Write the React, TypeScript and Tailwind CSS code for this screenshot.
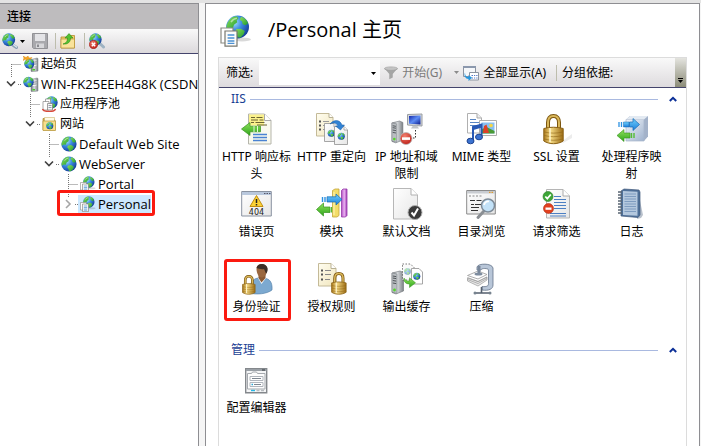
import type { ReactNode } from "react";

type IconProps = { className?: string };

// Gradients shared by all the icons
function IconDefs() {
  return (
    <svg className="absolute size-0" aria-hidden="true">
      <defs>
        <radialGradient id="ocean" cx="0.35" cy="0.3" r="0.75">
          <stop offset="0" stopColor="#a9e2fb" />
          <stop offset="0.45" stopColor="#3b8be0" />
          <stop offset="1" stopColor="#123a94" />
        </radialGradient>
        <linearGradient id="land" x1="0" y1="0" x2="1" y2="1">
          <stop offset="0" stopColor="#8fe05a" />
          <stop offset="1" stopColor="#1d9a32" />
        </linearGradient>
        <linearGradient id="steel" x1="0" y1="0" x2="1" y2="0">
          <stop offset="0" stopColor="#6d7176" />
          <stop offset="0.45" stopColor="#d9dcdf" />
          <stop offset="1" stopColor="#7c8186" />
        </linearGradient>
        <linearGradient id="gold" x1="0" y1="0" x2="1" y2="0">
          <stop offset="0" stopColor="#a9781c" />
          <stop offset="0.35" stopColor="#f6dc86" />
          <stop offset="1" stopColor="#9c6c14" />
        </linearGradient>
        <linearGradient id="paper" x1="0" y1="0" x2="1" y2="1">
          <stop offset="0" stopColor="#ffffff" />
          <stop offset="1" stopColor="#e6e6e6" />
        </linearGradient>
        <linearGradient id="cream" x1="0" y1="0" x2="1" y2="1">
          <stop offset="0" stopColor="#fffdf0" />
          <stop offset="1" stopColor="#f1e6bd" />
        </linearGradient>
        <linearGradient id="block" x1="0" y1="0" x2="1" y2="1">
          <stop offset="0" stopColor="#f2f6fb" />
          <stop offset="1" stopColor="#9fb2cd" />
        </linearGradient>
        <linearGradient id="greenArrow" x1="0" y1="0" x2="0" y2="1">
          <stop offset="0" stopColor="#8fe25c" />
          <stop offset="1" stopColor="#2fa51c" />
        </linearGradient>
        <linearGradient id="blueArrow" x1="0" y1="0" x2="0" y2="1">
          <stop offset="0" stopColor="#6fd0fb" />
          <stop offset="1" stopColor="#1c7fdc" />
        </linearGradient>
        <linearGradient id="purple" x1="0" y1="0" x2="1" y2="0">
          <stop offset="0" stopColor="#b14bc4" />
          <stop offset="0.5" stopColor="#e9b3f0" />
          <stop offset="1" stopColor="#a13ab6" />
        </linearGradient>
        <linearGradient id="screen" x1="0" y1="0" x2="1" y2="1">
          <stop offset="0" stopColor="#1226a8" />
          <stop offset="0.5" stopColor="#5d8df5" />
          <stop offset="1" stopColor="#0b1b8c" />
        </linearGradient>
        <radialGradient id="red" cx="0.4" cy="0.3" r="0.8">
          <stop offset="0" stopColor="#f2806f" />
          <stop offset="1" stopColor="#b9150f" />
        </radialGradient>
      </defs>
    </svg>
  );
}

function Globe({ x = 0, y = 0, size = 16 }: { x?: number; y?: number; size?: number }) {
  return (
    <g transform={`translate(${x} ${y}) scale(${size / 16})`}>
      <circle cx="8" cy="8" r="7.6" fill="url(#ocean)" />
      <path d="M2 4.2C3.3 2 5 .9 7.2.8L8.6 2 7.4 3.6l.4 1.3-2.2 1.6-.8 2.3-2-.4L.7 9.8C.3 7.6.9 5.7 2 4.2Z" fill="url(#land)" />
      <path d="M10.3 1.2c2.2.6 3.9 2.1 4.7 4.3l-1.7 1.3-1.9-.7-.5-2-1.5-.8Z" fill="url(#land)" />
      <path d="M7.3 9.4l2.9-.3 2.6 1.6-.7 2.2-2.3 2.3-1.7-.3-.8-2.4-1.2-1.3Z" fill="url(#land)" />
      <path d="M3.6 4.7C4.7 3 6 2.3 7.6 2.1" stroke="#fff" strokeOpacity="0.5" fill="none" />
    </g>
  );
}

function Padlock({ x = 0, y = 0, scale = 1 }: { x?: number; y?: number; scale?: number }) {
  return (
    <g transform={`translate(${x} ${y}) scale(${scale})`}>
      <path d="M5 15V8.5C5 4.5 7 2 10.5 2S16 4.5 16 8.5V15" fill="none" stroke="#7c560f" strokeWidth="4" />
      <path d="M5 15V8.5C5 4.5 7 2 10.5 2S16 4.5 16 8.5V15" fill="none" stroke="#d9b75a" strokeWidth="2" />
      <path d="M.8 14.5c6-1.7 13.5-1.7 19.4 0V27c-5.5 3.6-13.9 3.6-19.4 0Z" fill="url(#gold)" stroke="#8a6116" />
      <path d="M1.3 18c6 1.5 12.4 1.5 18.4 0M1.3 21.5c6 1.6 12.4 1.6 18.4 0M1.3 25c6 1.7 12.4 1.7 18.4 0" fill="none" stroke="#8f6518" strokeOpacity="0.6" />
      <path d="M7 14v14" stroke="#fff6cf" strokeWidth="1.5" />
    </g>
  );
}

function Tower({ x = 0, y = 0, scale = 1 }: { x?: number; y?: number; scale?: number }) {
  return (
    <g transform={`translate(${x} ${y}) scale(${scale})`}>
      <path d="M1 2 9 0l3.5 1.5V20L5 23 1 21.5Z" fill="url(#steel)" stroke="#6b7075" strokeWidth="0.6" />
      <path d="M1 2l5 1v19.5L1 21Z" fill="#b9bdc1" stroke="#777c81" strokeWidth="0.5" />
      <path d="M1.8 5l3.4.6M1.8 7l3.4.6M1.8 9.5l3.4.6M1.8 12l3.4.6" stroke="#4f5458" />
      <circle cx="3.5" cy="19" r="1.4" fill="#55d52c" />
    </g>
  );
}

function Svg16({ className = "size-4", children }: { className?: string; children: ReactNode }) {
  return <svg viewBox="0 0 16 16" className={`${className} shrink-0`} aria-hidden="true">{children}</svg>;
}

function Svg32({ children }: { children: ReactNode }) {
  return <svg viewBox="0 0 32 32" className="size-8 shrink-0" aria-hidden="true">{children}</svg>;
}

/* Tree icons */
function SmallServer() {
  return (
    <>
      <path d="M8 3.5 14 2l1 .5V15l-6 .8-1-.5Z" fill="url(#steel)" stroke="#7b8085" strokeWidth="0.5" />
      <path d="M9.5 5.5l4-.6M9.5 7.5l4-.5M9.5 9.5l4-.5" stroke="#fff" />
      <path d="M9.5 6.3l4-.6M9.5 8.3l4-.5" stroke="#666b70" strokeWidth="0.6" />
      <rect x="9.5" y="13" width="2.5" height="1.5" fill="#4ccb29" />
    </>
  );
}

function StartPageIcon() {
  return (
    <Svg16>
      <SmallServer />
      <Globe x={1} y={2.5} size={10.5} />
      <path d="M0 0l3 1.5L5 0l1 2 3-.5-1.5 2L5 3 3.5 5 3 3 0 4.5 1 2Z" fill="#f6a623" stroke="#d27d0c" strokeWidth="0.4" />
    </Svg16>
  );
}

function ServerIcon() {
  return (
    <Svg16>
      <SmallServer />
      <Globe x={0} y={0.5} size={11} />
    </Svg16>
  );
}

function PoolIcon() {
  return (
    <Svg16>
      <Globe x={3} y={0} size={13} />
      <path d="M3.5 3h5v8h-5Z" fill="#fff" stroke="#888" strokeWidth="0.7" />
      <path d="M1 5.5h6V14H1Z" fill="#fff" stroke="#888" strokeWidth="0.7" />
      <path d="M5.5 7.5h5V14h-5Z" fill="#f6f6f6" stroke="#777" strokeWidth="0.7" />
      <path d="M6.5 9.5h3M6.5 11.5h3" stroke="#7c8ba0" strokeWidth="0.8" />
      <path d="M.5 13c1 3.3 12 3.3 13 0" fill="none" stroke="#d84a3b" strokeWidth="1.4" />
    </Svg16>
  );
}

function SitesIcon() {
  return (
    <Svg16>
      <path d="M1 2.5h5L7.5 4H13v10H1Z" fill="#d9b04a" stroke="#a8842c" strokeWidth="0.7" />
      <path d="M2.5 1.5h10v4h-10Z" fill="#fffbe5" stroke="#c5a754" strokeWidth="0.5" />
      <path d="M1 5h12.5v9.5H1Z" fill="#f8df8c" stroke="#b8953a" strokeWidth="0.7" />
      <Globe x={4} y={6} size={7.5} />
    </Svg16>
  );
}

function SiteIcon() {
  return (
    <Svg16>
      <Globe />
    </Svg16>
  );
}

function AppIcon({ className }: IconProps) {
  return (
    <Svg16 className={className}>
      <ellipse cx="11" cy="12.2" rx="4.5" ry="1" fill="#000" fillOpacity="0.15" />
      <Globe x={2.8} y={0} size={12} />
      <path d="M.5 6.5h6V14h-6Z" fill="#fff" stroke="#8b8b83" strokeWidth="0.6" />
      <path d="M2.5 8h6v7.6h-6Z" fill="#fcfcfa" stroke="#77776f" strokeWidth="0.6" />
      <path d="M3.8 10h3.4M3.8 11.5h3.4M3.8 13h3.4M3.8 14.2h3.4" stroke="#4a90d4" strokeWidth="0.7" />
    </Svg16>
  );
}

/* Toolbar icons */
function ConnectIcon() {
  return (
    <Svg16>
      <path d="M8.5 9.5l3 3 3 2" fill="none" stroke="#8aa0b4" strokeWidth="3" strokeLinecap="round" />
      <path d="M9.5 10l3 2.5 2 1.5" fill="none" stroke="#dbe6ee" strokeWidth="1.4" strokeLinecap="round" />
      <Globe size={13.5} />
    </Svg16>
  );
}

function SaveIcon() {
  return (
    <Svg16>
      <path d="M.5.5h15v15h-14l-1-1Z" fill="#a9a9ad" stroke="#929296" />
      <path d="M3 1h10v7H3Z" fill="#e4e4e7" />
      <path d="M4 10.5h8V15H4Z" fill="#d7d7da" />
      <path d="M5 11.5h2V14H5Z" fill="#8b8b90" />
    </Svg16>
  );
}

function UpFolderIcon() {
  return (
    <Svg16>
      <path d="M1 4h6l1.5-1.5h6V15H1Z" fill="#f3d071" stroke="#b28c2e" strokeWidth="0.8" />
      <path d="M1 6h13.5v9H1Z" fill="#f9e39b" stroke="#b28c2e" strokeWidth="0.6" />
      <path d="M3 11c3.5-1 4.5-3 4.5-6H5L9 .6 13 5h-2.5C10.5 9 8 11.5 3 11Z" fill="#54c233" stroke="#2d8a17" strokeWidth="0.6" />
    </Svg16>
  );
}

function DisconnectIcon() {
  return (
    <Svg16>
      <path d="M9.5 9.5l3 2.5 2 2" fill="none" stroke="#9fb3c3" strokeWidth="3" strokeLinecap="round" />
      <Globe size={13} />
      <circle cx="4.5" cy="11.5" r="4.2" fill="url(#red)" stroke="#9d120c" strokeWidth="0.5" />
      <path d="M2.8 9.8l3.4 3.4M6.2 9.8l-3.4 3.4" stroke="#fff" strokeWidth="1.4" />
    </Svg16>
  );
}

function FunnelIcon() {
  return (
    <Svg16 className="size-3.5">
      <path d="M.5 2.5 6 9v6l4-2V9l5.5-6.5Z" fill="#a5a5a5" />
      <ellipse cx="8" cy="3" rx="7.5" ry="2" fill="#c3c3c3" stroke="#999" strokeWidth="0.7" />
    </Svg16>
  );
}

function ShowAllIcon() {
  return (
    <Svg16>
      <path d="M.5 1.5h12v10H.5Z" fill="#f5f7fa" stroke="#8b93a0" />
      <path d="M0 1h13v2H0Z" fill="#8b98ad" />
      <path d="M6.5 7.5h9V15h-9Z" fill="#fff" stroke="#8b93a0" />
      <path d="M8.5 10.5H10m1 0h1.2m1 0h1.3M8.5 13H10m1 0h1.2m1 0h1.3" stroke="#5579c7" strokeWidth="1.2" />
      <path d="M2 7.5c0 3 1 4.5 3.5 4.5v-2L9 12.8 5.5 16v-2C2.5 14 .8 11 2 7.5Z" fill="#2496de" />
    </Svg16>
  );
}

function DropArrow({ className }: IconProps) {
  return (
    <svg viewBox="0 0 5 3" className={`h-[3px] w-[5px] shrink-0 ${className ?? ""}`} aria-hidden="true">
      <path d="M0 0h5L2.5 3Z" fill="currentColor" />
    </svg>
  );
}

/* Feature icons */
function HeadersIcon() {
  return (
    <Svg32>
      <path d="M7.5 1h16L30 7.5V31H7.5Z" fill="#f9f9ee" stroke="#b5b5ab" />
      <path d="M8 1.5h15v11H8Z" fill="#fbf18c" />
      <path d="M23.5 1v6.5H30" fill="#fff" stroke="#aaa" />
      <path d="M10 4.5h4m1.5 0h6M10 7h7m1.5 0h4M10 9.5h3m1.5 0h9M16 12h10" stroke="#6a6332" />
      <path d="M.5 16 9 9.5v3.7h10.5v5.6H9v3.7Z" fill="url(#greenArrow)" stroke="#39921e" strokeWidth="0.7" />
      <path d="M13 13v6M16.5 13v6" stroke="#e2f8d8" />
      <path d="M12 21.5h14M12 24.5h14M12 27.5h14" stroke="#4a83d2" strokeWidth="1.3" />
    </Svg32>
  );
}

function PageGlobe({ x, y }: { x: number; y: number }) {
  return (
    <g transform={`translate(${x} ${y})`}>
      <path d="M.5.5H10L13.5 4v14.5H.5Z" fill="url(#paper)" stroke="#909090" strokeWidth="0.8" />
      <path d="M10 .5V4h3.5" fill="#fff" stroke="#909090" strokeWidth="0.7" />
      <Globe x={3.5} y={6.5} size={7.5} />
    </g>
  );
}

function RedirectIcon() {
  return (
    <Svg32>
      <path d="M.5.5H13l4 4V23H.5Z" fill="url(#cream)" stroke="#c4ba98" />
      <path d="M13 .5v4h4" fill="#fff" stroke="#b8b094" />
      <path d="M3 8.5h2M3 12.5h2M3 16.5h2" stroke="#555" strokeWidth="2" />
      <path d="M7 8.5h6M7 12.5h6M7 16.5h4" stroke="#999" />
      <PageGlobe x={8} y={10} />
      <PageGlobe x={18} y={13} />
      <path d="M14 11c4-5 10-4.5 12 1h2.5l-4 5-5-4H22c-1.5-3-4-4-8-2Z" fill="#3182d4" stroke="#195da5" strokeWidth="0.5" />
    </Svg32>
  );
}

function IpIcon() {
  return (
    <Svg32>
      <Tower x={0} y={8} scale={0.95} />
      <path d="M16.5 1.5 31 1v12l-14.5-1Z" fill="#d5d8dc" stroke="#9a9ea3" />
      <path d="M18 3l11.5-.5v9L18 10.8Z" fill="url(#screen)" />
      <path d="M22 12.5h4l2 3h-8Z" fill="#c0c4c9" />
      <path d="M24.5 17v8H20" fill="none" stroke="#333" strokeDasharray="1.5 1.5" />
      <circle cx="15" cy="25.5" r="6" fill="url(#red)" stroke="#b9b9b9" strokeWidth="0.8" />
      <path d="M11 24.3h8v2.6h-8Z" fill="#fff" />
    </Svg32>
  );
}

function MimeIcon() {
  return (
    <Svg32>
      <path d="M1.5.5H11L15.5 5v15h-14Z" fill="#fff" stroke="#b0b0b0" />
      <path d="M11 .5V5h4.5" fill="#eee" stroke="#aaa" />
      <path d="M4 6.5h6M4 9.5h9M4 12.5h9" stroke="#5a86c4" />
      <path d="M13.5 7.5h17v15h-17Z" fill="#fff" stroke="#adadad" />
      <path d="M15.5 9.5h13v11h-13Z" fill="#88bff2" />
      <path d="M15.5 20.5v-4l5-2.5 8 4v2.5Z" fill="#4b9b35" />
      <path d="M17 20l1-7 2.5-1.5L23 20Z" fill="#dd4029" />
      <circle cx="25" cy="12.5" r="1.8" fill="#f6d643" />
      <path d="M7 27V14l8.5-2.5V23" fill="none" stroke="#2858b4" strokeWidth="2" />
      <path d="M7 15.5l8.5-2.5" stroke="#2858b4" strokeWidth="3" />
      <ellipse cx="4.5" cy="28" rx="3.5" ry="2.8" fill="#3b72d0" stroke="#1d4390" />
      <ellipse cx="13" cy="24" rx="3.5" ry="2.8" fill="#3b72d0" stroke="#1d4390" />
    </Svg32>
  );
}

function SslIcon() {
  return (
    <Svg32>
      <path d="M20 29 31 21v4l-9 5Z" fill="#ececec" />
      <Padlock x={2} y={1} />
    </Svg32>
  );
}

function HandlersIcon() {
  return (
    <Svg32>
      <path d="M10 6.5 14 3h18v20.5L28 28H10Z" fill="#a3b2c9" />
      <path d="M10 6.5h18V28H10Z" fill="url(#block)" stroke="#a7b5ca" strokeWidth="0.7" />
      <path d="M10 6.5 14 3h18l-4 3.5Z" fill="#e3eaf2" />
      <path d="M13.5 9H17V5.5l6.5 6-6.5 6V14h-3.5Z" fill="url(#blueArrow)" stroke="#1668b5" strokeWidth="0.7" />
      <path d="M3 9v5M5.5 9v5" stroke="#2d92e2" strokeWidth="1.3" />
      <path d="M7.5 9H13v5H7.5Z" fill="url(#blueArrow)" stroke="#1668b5" strokeWidth="0.5" />
      <path d="M1 22.5l7-6V20h6v5H8v3.5Z" fill="url(#greenArrow)" stroke="#37921e" strokeWidth="0.6" />
      <path d="M15.5 20v5M18 20v5" stroke="#55bd35" strokeWidth="1.4" />
    </Svg32>
  );
}

function ErrorPagesIcon() {
  return (
    <Svg32>
      <path d="M.7 3.5h29.6V28H.7Z" fill="url(#paper)" stroke="#8992a0" />
      <path d="M1 4h29v3H1Z" fill="#b9c8dd" />
      <path d="M23 5.5h1.5m1 0H27m1 0h1.5" stroke="#556" />
      <path d="M15.5 7.5 22 18.5H9Z" fill="#fcd234" stroke="#c08d12" strokeLinejoin="round" />
      <path d="M15.5 11v4M15.5 16v1.5" stroke="#222" strokeWidth="1.5" />
      <text x="15.5" y="26.5" textAnchor="middle" fontSize="8" fontFamily="DejaVu Sans, sans-serif" fill="#222">404</text>
    </Svg32>
  );
}

function ModulesIcon() {
  return (
    <Svg32>
      <path d="M16.5 2.5 19 1h4v26.5L21 29h-4.5Z" fill="#f3dd69" stroke="#c3a53b" strokeWidth="0.8" />
      <path d="M25.5 2.5 27 1h4v26.5L29.5 29h-4Z" fill="url(#purple)" stroke="#9639a8" strokeWidth="0.8" />
      <path d="M18 4v23" stroke="#fff6bc" />
      <path d="M6.5 9v5M9 9v5" stroke="#2d92e2" strokeWidth="1.4" />
      <path d="M11 8.8h9V6l6 5.5L20 17v-3h-9Z" fill="url(#blueArrow)" stroke="#1668b5" strokeWidth="0.7" />
      <path d="M.5 21.5 7.5 15v4H14v5.5H7.5V28Z" fill="url(#greenArrow)" stroke="#37921e" strokeWidth="0.7" />
      <path d="M15.5 19v5.5" stroke="#55bd35" strokeWidth="1.3" />
    </Svg32>
  );
}

function DefaultDocIcon() {
  return (
    <Svg32>
      <path d="M2.5.5H20L26.5 7v24h-24Z" fill="url(#paper)" stroke="#b7b7b7" />
      <path d="M20 .5V7h6.5" fill="#fff" stroke="#b0b0b0" />
      <circle cx="24" cy="24.5" r="7" fill="#3a3a3a" stroke="#b0b0b0" />
      <path d="M20.5 24.5l2.5 3 4-7" fill="none" stroke="#fff" strokeWidth="2" />
    </Svg32>
  );
}

function BrowsingIcon() {
  return (
    <Svg32>
      <path d="M.7 2.5h28.6V26H.7Z" fill="url(#paper)" stroke="#8a8a8a" />
      <path d="M1 3h28v2.5H1Z" fill="#c9ccd1" />
      <path d="M23 4.3h1.5m1 0H27" stroke="#e09c2f" strokeWidth="1.3" />
      <path d="M3 8h2m1.5 0h2m1.5 0h2m1.5 0h2" stroke="#888" />
      <path d="M4 12.5h5m1.5 0h5M5 16.5h3m1 0h6M5 19.5h8M5 22.5h7" stroke="#333" />
      <path d="M17.5 23.5l-5.5 6" stroke="#8b8f94" strokeWidth="3" strokeLinecap="round" />
      <circle cx="22" cy="17.5" r="6.5" fill="#c3e2f8" stroke="#7e8b98" strokeWidth="1.5" />
      <path d="M18 17c.5-3 3-4 5-3.5" fill="none" stroke="#fff" strokeWidth="1.8" />
    </Svg32>
  );
}

function FilteringIcon() {
  return (
    <Svg32>
      <path d="M5.5 1.5H22L28.5 8v22h-23Z" fill="url(#paper)" stroke="#b5b5b5" />
      <path d="M22 1.5V8h6.5" fill="#fff" stroke="#aaa" />
      <path d="M13 8.5h7M13 11.5h12M13 14.5h12M13 17.5h12M13 20.5h12M9 25.5h16M9 28h16" stroke="#4c7fc3" />
      <circle cx="7" cy="8.5" r="5" fill="#3da637" stroke="#2b7b28" strokeWidth="0.6" />
      <path d="M4.3 8.5l2 2.2 3.5-4.2" fill="none" stroke="#fff" strokeWidth="1.8" />
      <circle cx="7.5" cy="20.5" r="5" fill="#e2401f" stroke="#a82a10" strokeWidth="0.6" />
      <path d="M4.5 19.5h6v2.3h-6Z" fill="#fff" />
    </Svg32>
  );
}

function LoggingIcon() {
  return (
    <Svg32>
      <path d="M22 3l5 24-2 3-4 1Z" fill="#b9c1cc" />
      <path d="M5 3 8 1l15 1 1 2v23l-2 2.5L5 28Z" fill="#4f7099" stroke="#40597b" strokeWidth="0.7" />
      <path d="M7 3l14.5.8v24L7 27Z" fill="#b4c8de" />
      <path d="M8.5 6H20M8.5 8.5H20M8.5 11H20M8.5 13.5H20M8.5 16H20M8.5 18.5H20M8.5 21H20M8.5 23.5H20" stroke="#7e9cc0" />
      <path d="M2 4h4M2 7h4M2 10h4M2 13h4M2 16h4M2 19h4M2 22h4M2 25h4" stroke="#596573" strokeWidth="1.4" />
    </Svg32>
  );
}

function AuthenticationIcon() {
  return (
    <Svg32>
      <path d="M9 30c-1-9 2-14 8-15l8 .5c5 1 6.5 6 6 11.5-5 4-16 5-22 3Z" fill="#7ca9d0" stroke="#4f7ca5" strokeWidth="0.6" />
      <path d="M17 15l3.5 6 4.5-6Z" fill="#fff" />
      <path d="M17.5 12v3l3 4.5 4-4.5v-4Z" fill="#8a5a35" />
      <path d="M15.5 6c0-4 3-5.5 6-5s5.5 3 4.5 7.5-3.5 6-5.5 6-5-3.5-5-8.5Z" fill="#9a6840" />
      <path d="M15.5 5c1-5 9.5-5.5 11 0 .5 2-.5 5-1.5 5.5L23 6c-2 .5-5 0-7.5-1Z" fill="#3d3029" />
      <Padlock x={1} y={12} scale={0.65} />
    </Svg32>
  );
}

function AuthorizationIcon() {
  return (
    <Svg32>
      <path d="M2.5.5H15l5 5V23H2.5Z" fill="url(#cream)" stroke="#c4ba98" />
      <path d="M15 .5v5h5" fill="#fff" stroke="#b8b094" />
      <path d="M5 7.5h2M5 11.5h2M5 16.5h2" stroke="#555" strokeWidth="2" />
      <path d="M9 7.5h6M9 11.5h6M9 16.5h5" stroke="#888" />
      <Padlock x={15} y={9} scale={0.75} />
    </Svg32>
  );
}

function OutputCacheIcon() {
  return (
    <Svg32>
      <Tower x={0} y={8} scale={1} />
      <path d="M11.5 1h8l4 4v12h-12Z" fill="#fafafa" stroke="#555" strokeWidth="0.8" strokeDasharray="1.5 1.5" />
      <g opacity="0.5">
        <Globe x={13} y={5} size={7} />
      </g>
      <path d="M20.5 5.5H28L31.5 9v12h-11Z" fill="#fff" stroke="#909090" strokeWidth="0.8" />
      <Globe x={22} y={9.5} size={7.5} />
      <path d="M13 15c1 2.5 3 3 5.5 3v-3.2l6 5-6 4.7V21C15 21 12.5 19 13 15Z" fill="url(#greenArrow)" stroke="#37921e" strokeWidth="0.5" />
    </Svg32>
  );
}

function CompressionIcon() {
  return (
    <Svg32>
      <path d="M11 7V4c1-4 15-4 16 1v17c0 4-4 6-11 5v-3.500c5 .5 6.5-.5 6.500-3V7c0-2-7.500-2-7.500 0Z" fill="#b8c6d8" stroke="#66758a" strokeWidth="0.8" />
      <path d="M1.5 15 12 18.5 21 14v3l-9 6-10.500-5Z" fill="#e9e9e9" stroke="#999" strokeWidth="0.7" />
      <path d="M1.5 12.5 12 16l9-4.500-9-3.500Z" fill="#fff" stroke="#999" strokeWidth="0.8" />
      <path d="M1.5 14.5 12 18.5l9-4.500M1.500 16.500 12 20.500l9-5" fill="none" stroke="#999" strokeWidth="0.7" />
      <path d="M13 3v7" stroke="#78879a" strokeWidth="3" />
      <ellipse cx="12.5" cy="11" rx="4" ry="1.5" fill="#7d8c9f" />
      <path d="M15.5 24v6M8 30h17" stroke="#545f6d" strokeWidth="1.6" />
      <circle cx="9" cy="30" r="1.5" fill="#77838f" />
      <circle cx="24" cy="30" r="1.5" fill="#77838f" />
    </Svg32>
  );
}

function ConfigEditorIcon() {
  return (
    <Svg32>
      <path d="M4.7 4.7h21v24h-21Z" fill="#f5f6f7" stroke="#84888c" strokeWidth="1.4" />
      <path d="M5 5h20.5v2H5Z" fill="#9aa0a6" />
      <path d="M21 6h3" stroke="#33383d" />
      <path d="M6.5 9.5h4l1-1.5h4l1 1.5H24V25H6.5Z" fill="#fdfdfd" stroke="#a5a9ae" />
      <path d="M9 12.5h13v4H9ZM9 18.5h13v4H9Z" fill="#fff" stroke="#b1b6bd" />
      <path d="M11 14.5h9M13 20.5h7" stroke="#7f8791" />
      <path d="M10.5 20.5H12" stroke="#27a6d6" strokeWidth="1.5" />
      <path d="M10 26.5h4" stroke="#25b7e5" strokeWidth="1.4" />
      <path d="M15.5 26.5h3m1.5 0h3" stroke="#b7bbc0" strokeWidth="1.4" />
    </Svg32>
  );
}

type TreeNode = {
  label: string;
  icon: ReactNode;
  indent: string;
  expander?: "open" | "closed";
  first?: boolean;
  selected?: boolean;
};

const tree: TreeNode[] = [
  { label: "起始页", icon: <StartPageIcon />, indent: "pl-[2px]", first: true },
  { label: "WIN-FK25EEH4G8K (CSDN", icon: <ServerIcon />, indent: "pl-[2px]", expander: "open" },
  { label: "应用程序池", icon: <PoolIcon />, indent: "pl-[21px]" },
  { label: "网站", icon: <SitesIcon />, indent: "pl-[21px]", expander: "open" },
  { label: "Default Web Site", icon: <SiteIcon />, indent: "pl-[40px]" },
  { label: "WebServer", icon: <SiteIcon />, indent: "pl-[40px]", expander: "open" },
  { label: "Portal", icon: <AppIcon />, indent: "pl-[59px]" },
  { label: "Personal", icon: <AppIcon />, indent: "pl-[59px]", expander: "closed", selected: true },
];

function Branch({ expander, first }: Pick<TreeNode, "expander" | "first">) {
  return (
    <svg viewBox="0 0 19 20" className="h-5 w-[19px] shrink-0" fill="none" aria-hidden="true">
      {expander ? (
        <>
          <path d="M9.5 0v4M16 10.5h3" stroke="#777" strokeDasharray="1 1" />
          {expander === "open" ? (
            <path d="M5 7.5l4 4 4-4" stroke="#404040" strokeWidth="1.6" />
          ) : (
            <path d="M7 6l4 4-4 4" stroke="#a6a6a6" strokeWidth="1.6" />
          )}
        </>
      ) : (
        <path d={first ? "M9.5 10v10M9.5 10.5h10" : "M9.5 0v20M9.5 10.5h10"} stroke="#777" strokeDasharray="1 1" />
      )}
    </svg>
  );
}

function ConnectionTree() {
  return (
    <ul className="font-['Open_Sans','Noto_Sans_CJK_SC',sans-serif] text-[13px] leading-5">
      {tree.map((node) => (
        <li key={node.label} className={`flex h-5 ${node.indent}`}>
          <div className="relative flex items-center">
            <Branch expander={node.expander} first={node.first} />
            <button
              className={`flex items-center gap-0.5 whitespace-nowrap pl-0.5 ${node.selected ? "h-[18px] bg-[#cce8ff]" : "h-5"}`}
            >
              {node.icon}
              <span className={/^[\x20-\x7e]+$/.test(node.label) ? "" : "text-xs"}>{node.label}</span>
            </button>
            {node.selected && (
              <span className="absolute -top-1 -right-1 -bottom-0.5 -left-0.5 rounded-[3px] border-[3px] border-[#fb1a10]" />
            )}
          </div>
        </li>
      ))}
    </ul>
  );
}

type Feature = { label: string; icon: ReactNode; marked?: boolean };

const iisFeatures: Feature[] = [
  { label: "HTTP 响应标头", icon: <HeadersIcon /> },
  { label: "HTTP 重定向", icon: <RedirectIcon /> },
  { label: "IP 地址和域限制", icon: <IpIcon /> },
  { label: "MIME 类型", icon: <MimeIcon /> },
  { label: "SSL 设置", icon: <SslIcon /> },
  { label: "处理程序映射", icon: <HandlersIcon /> },
  { label: "错误页", icon: <ErrorPagesIcon /> },
  { label: "模块", icon: <ModulesIcon /> },
  { label: "默认文档", icon: <DefaultDocIcon /> },
  { label: "目录浏览", icon: <BrowsingIcon /> },
  { label: "请求筛选", icon: <FilteringIcon /> },
  { label: "日志", icon: <LoggingIcon /> },
  { label: "身份验证", icon: <AuthenticationIcon />, marked: true },
  { label: "授权规则", icon: <AuthorizationIcon /> },
  { label: "输出缓存", icon: <OutputCacheIcon /> },
  { label: "压缩", icon: <CompressionIcon /> },
];

const managementFeatures: Feature[] = [{ label: "配置编辑器", icon: <ConfigEditorIcon /> }];

function FeatureGroup({ title, features }: { title: string; features: Feature[] }) {
  return (
    <section>
      <div className="flex h-[22px] items-center gap-1 pr-1 pl-3">
        <h2 className="text-xs text-[#1c3f94]">{title}</h2>
        <div className="h-px flex-1 bg-[#a9b9e0]" />
        <button aria-label={title} className="flex h-4 w-5 items-center justify-center pl-0.5">
          <svg viewBox="0 0 8 6" className="h-1.5 w-2" fill="none" aria-hidden="true">
            <path d="M.8 5 4 1.8 7.2 5" stroke="#0b2f97" strokeWidth="2" />
          </svg>
        </button>
      </div>
      <ul className="grid auto-rows-[75px] grid-cols-[repeat(auto-fill,75px)]">
        {features.map((feature) => (
          <li key={feature.label} className="relative">
            <button className="flex w-full flex-col items-center gap-[3px] px-0.5 pt-[3px] text-xs leading-[17px]">
              {feature.icon}
              <span className="break-all">{feature.label}</span>
            </button>
            {feature.marked && (
              <span className="absolute -top-px right-[3px] left-[5px] h-[62px] rounded-[3px] border-[3px] border-[#fb1a10]" />
            )}
          </li>
        ))}
      </ul>
    </section>
  );
}

function Separator() {
  return <span className="h-4 w-px shrink-0 bg-[#bdbdad]" />;
}

export default function App() {
  return (
    <div className="flex min-h-screen flex-col bg-[#f5f5f5] font-['Noto_Sans','Noto_Sans_CJK_SC',sans-serif] text-xs text-black">
      <IconDefs />
      <div className="h-[3px] bg-[#e3e3e3]" />
      <div className="flex flex-1 gap-1.5 pr-px">
        <aside className="flex w-[199px] shrink-0 flex-col border-t border-r border-[#8e8e92] bg-white">
          <h2 className="flex h-[25px] shrink-0 items-center bg-[#bebcbe] pl-[7px] text-xs font-medium">连接</h2>
          <div className="flex h-[25px] shrink-0 items-center border-b border-[#44446c] bg-linear-to-b from-[#f9f9f9] to-[#dcd9dc] pl-0.5">
            <button aria-label="连接" className="flex items-center gap-0.5">
              <ConnectIcon />
              <DropArrow />
            </button>
            <button aria-label="保存" className="mx-[7px]">
              <SaveIcon />
            </button>
            <Separator />
            <button aria-label="向上" className="mr-2 ml-1">
              <UpFolderIcon />
            </button>
            <Separator />
            <button aria-label="断开" className="ml-1">
              <DisconnectIcon />
            </button>
          </div>
          <ConnectionTree />
        </aside>

        <main className="flex min-w-0 flex-1 flex-col border-x border-t border-[#8e8e92] bg-white px-3">
          <header className="flex h-[53px] items-center gap-4 pl-0.5">
            <AppIcon className="size-8" />
            <h1 className="font-['Open_Sans','Noto_Sans_CJK_SC',sans-serif] text-[20px]">/Personal 主页</h1>
          </header>
          <div className="flex flex-1 flex-col border-x border-t border-[#dcdcdc]">
            <div className="flex h-[30px] items-center overflow-hidden whitespace-nowrap border-b border-[#44446c] bg-linear-to-b from-[#f9f9f9] to-[#dedbde]">
              <label htmlFor="filter" className="pr-1.5 pl-[7px]">筛选:</label>
              <div className="relative h-[25px] w-[121px] shrink-0">
                <select id="filter" className="size-full appearance-none bg-white pr-4 pl-1 outline-none">
                  <option value=""></option>
                </select>
                <DropArrow className="pointer-events-none absolute top-3 right-1" />
              </div>
              <button className="ml-1 flex items-center gap-1 text-[#7b7b7b]">
                <FunnelIcon />
                开始(G)
              </button>
              <DropArrow className="mr-1 ml-3 text-[#8b8b8b]" />
              <button className="mr-2.5 flex items-center gap-1">
                <ShowAllIcon />
                全部显示(A)
              </button>
              <Separator />
              <span className="pl-[5px]">分组依据:</span>
              <button aria-label="更多" className="ml-auto flex h-full w-[11px] shrink-0 flex-col items-center justify-end gap-px bg-linear-to-b from-[#e4e4df] to-[#8c8c78] pb-1">
                <span className="h-px w-[5px] bg-black" />
                <DropArrow />
              </button>
            </div>
            <div className="flex flex-col gap-1">
              <FeatureGroup title="IIS" features={iisFeatures} />
              <FeatureGroup title="管理" features={managementFeatures} />
            </div>
          </div>
        </main>
      </div>
    </div>
  );
}
